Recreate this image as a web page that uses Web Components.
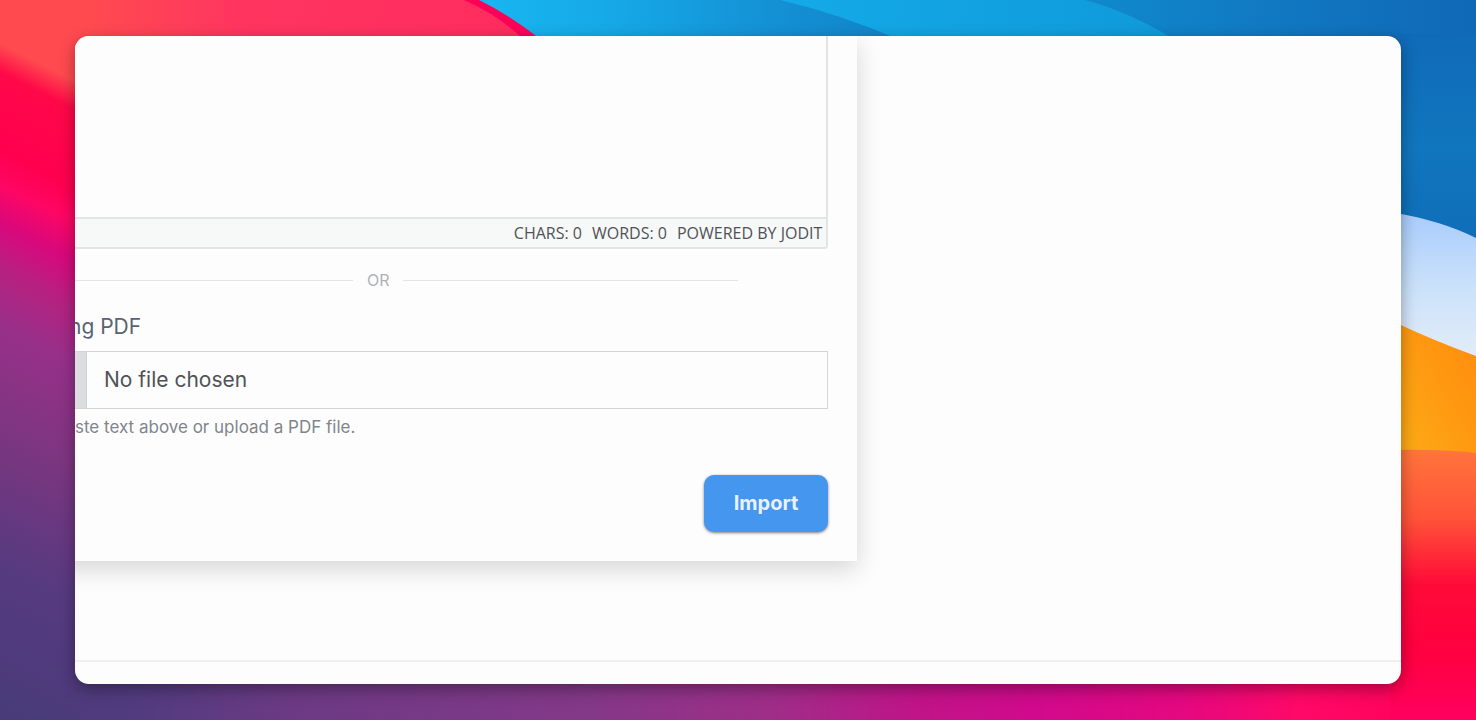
<!DOCTYPE html>
<html lang="en">
<head>
<meta charset="utf-8">
<meta name="viewport" content="width=device-width, initial-scale=1">
<title>Import</title>
<style>
  body {
    margin: 0;
    font-family: Inter, "Liberation Sans", sans-serif;
    color: #505256;
  }
</style>
</head>
<body>
<desktop-wallpaper>
  <app-window>
    <import-panel>
      <text-editor></text-editor>
      <or-divider>OR</or-divider>
      <file-field label="ng PDF" hint="ste text above or upload a PDF file."></file-field>
      <action-button slot="actions">Import</action-button>
    </import-panel>
  </app-window>
</desktop-wallpaper>

<script>
/** Attaches an open shadow root with the given markup. */
class BaseElement extends HTMLElement {
  constructor() {
    super();
    this.attachShadow({ mode: 'open' });
  }

  connectedCallback() {
    this.shadowRoot.innerHTML = this.template();
  }
}

/** Full page backdrop with coloured waves. */
class DesktopWallpaper extends BaseElement {
  template() {
    return `
      <style>
        :host {
          display: flex;
          position: relative;
          box-sizing: border-box;
          min-height: 100vh;
          padding: 36px 75px;
          overflow: hidden;
        }
        svg {
          position: absolute;
          inset: 0;
          width: 100%;
          height: 100%;
        }
        ::slotted(*) { flex: 1; min-width: 0; }
      </style>
      <svg viewBox="0 0 1476 720" preserveAspectRatio="none" aria-hidden="true">
        <defs>
          <linearGradient id="left" gradientUnits="userSpaceOnUse" x1="0" y1="0" x2="-288" y2="576">
            <stop offset="0" stop-color="#ff4a50"/>
            <stop offset=".06" stop-color="#ff4a50"/>
            <stop offset=".1" stop-color="#ff0848"/>
            <stop offset=".21" stop-color="#ff0050"/>
            <stop offset=".255" stop-color="#ff0664"/>
            <stop offset=".31" stop-color="#d8087c"/>
            <stop offset=".37" stop-color="#b82080"/>
            <stop offset=".45" stop-color="#98308a"/>
            <stop offset=".6" stop-color="#7c3680"/>
            <stop offset=".78" stop-color="#573a80"/>
            <stop offset="1" stop-color="#483b7a"/>
          </linearGradient>
          <linearGradient id="top" gradientUnits="userSpaceOnUse" x1="0" y1="0" x2="535" y2="0">
            <stop offset="0" stop-color="#ff4a50"/>
            <stop offset=".17" stop-color="#ff4a50"/>
            <stop offset=".45" stop-color="#ff3560"/>
            <stop offset="1" stop-color="#ff2c5e"/>
          </linearGradient>
          <linearGradient id="bottom" gradientUnits="userSpaceOnUse" x1="0" y1="0" x2="1476" y2="0">
            <stop offset="0" stop-color="#483b7a"/>
            <stop offset=".1" stop-color="#533b80"/>
            <stop offset=".2" stop-color="#6c3a84"/>
            <stop offset=".4" stop-color="#843888"/>
            <stop offset=".52" stop-color="#9e2e88"/>
            <stop offset=".62" stop-color="#c01488"/>
            <stop offset=".7" stop-color="#d00a8c"/>
            <stop offset=".8" stop-color="#e40880"/>
            <stop offset=".88" stop-color="#ff0868"/>
            <stop offset="1" stop-color="#ff0054"/>
          </linearGradient>
          <linearGradient id="sky" gradientUnits="userSpaceOnUse" x1="480" y1="0" x2="1476" y2="0">
            <stop offset="0" stop-color="#18b6f0"/>
            <stop offset=".12" stop-color="#16aae8"/>
            <stop offset=".3" stop-color="#1490d4"/>
            <stop offset=".42" stop-color="#1284c8"/>
            <stop offset=".62" stop-color="#1088cc"/>
            <stop offset=".8" stop-color="#1178c2"/>
            <stop offset="1" stop-color="#1068b6"/>
          </linearGradient>
          <linearGradient id="wave" gradientUnits="userSpaceOnUse" x1="770" y1="0" x2="1170" y2="0">
            <stop offset="0" stop-color="#14aae8"/>
            <stop offset="1" stop-color="#109ada"/>
          </linearGradient>
          <linearGradient id="side" x1="0" y1="0" x2="0" y2="1">
            <stop offset="0" stop-color="#106ab8"/>
            <stop offset=".5" stop-color="#1076be"/>
            <stop offset="1" stop-color="#106cb8"/>
          </linearGradient>
          <linearGradient id="cloud" x1="0" y1="0" x2="0" y2="1">
            <stop offset="0" stop-color="#a8ccfc"/>
            <stop offset=".5" stop-color="#cce2fa"/>
            <stop offset="1" stop-color="#e6eef8"/>
          </linearGradient>
          <linearGradient id="sun" x1="1" y1="0" x2="0" y2="1">
            <stop offset="0" stop-color="#ff8c10"/>
            <stop offset=".4" stop-color="#ff9810"/>
            <stop offset="1" stop-color="#fcb018"/>
          </linearGradient>
          <linearGradient id="ember" x1="0" y1="0" x2="0" y2="1">
            <stop offset="0" stop-color="#ff743c"/>
            <stop offset=".25" stop-color="#ff5438"/>
            <stop offset=".5" stop-color="#ff0a38"/>
            <stop offset=".75" stop-color="#ff0040"/>
            <stop offset="1" stop-color="#ff0060"/>
          </linearGradient>
        </defs>
        <rect width="1476" height="720" fill="url(#left)"/>
        <path d="M75 0H600V60H75Z" fill="url(#top)"/>
        <rect x="80" y="660" width="1396" height="60" fill="url(#bottom)"/>
        <path d="M464 0Q500 16 524 40H560L490 0Z" fill="#ff0058"/>
        <path d="M479 0H1476V60H565Q520 20 479 0Z" fill="url(#sky)"/>
        <path d="M780 0Q840 14 900 40H1175Q1130 12 1085 0Z" fill="url(#wave)"/>
        <path d="M1390 34H1476V260H1390Z" fill="url(#side)"/>
        <path d="M1390 212Q1440 220 1476 238V370H1390Z" fill="url(#cloud)"/>
        <path d="M1390 320Q1432 340 1476 356V470H1390Z" fill="url(#sun)"/>
        <path d="M1390 450Q1440 449 1476 453V720H1390Z" fill="url(#ember)"/>
      </svg>
      <slot></slot>
    `;
  }
}

/** Rounded window that clips the page shown in it. */
class AppWindow extends BaseElement {
  template() {
    return `
      <style>
        :host {
          display: flex;
          position: relative;
          background: #fdfdfd;
          border-radius: 14px;
          box-shadow: 0 5px 16px rgba(0, 0, 0, 0.36);
        }
        main {
          display: flex;
          flex: 1;
          flex-direction: column;
          min-width: 0;
          overflow: hidden;
          border-radius: 14px;
        }
        /* the panel runs on past the left edge of the window */
        ::slotted(*) {
          width: calc(59% + 40px);
          margin-left: -40px;
        }
        hr {
          width: 100%;
          height: 2px;
          margin: auto 0 22px;
          border: 0;
          background: #eff0f0;
        }
      </style>
      <main>
        <slot></slot>
        <hr>
      </main>
    `;
  }
}

/** Form card with its actions at the bottom right. */
class ImportPanel extends BaseElement {
  template() {
    return `
      <style>
        :host {
          display: block;
          box-sizing: border-box;
          padding: 0 29px 29px 40px;
          background: #fdfdfd;
          box-shadow: 0 8px 24px rgba(0, 0, 0, 0.16);
        }
        footer {
          display: flex;
          justify-content: flex-end;
          margin-top: 36px;
        }
      </style>
      <form>
        <slot></slot>
        <footer><slot name="actions"></slot></footer>
      </form>
    `;
  }
}

/** Plain editing area with a status bar below it. */
class TextEditor extends BaseElement {
  template() {
    return `
      <style>
        :host {
          display: block;
          border: 2px solid #e4e4e4;
          border-width: 0 2px 2px 0;
          border-radius: 0 0 4px 0;
        }
        textarea {
          display: block;
          box-sizing: border-box;
          width: 100%;
          height: 181px;
          padding: 8px;
          border: 0;
          outline: 0;
          background: transparent;
          resize: none;
          font: inherit;
        }
        .status {
          display: flex;
          justify-content: flex-end;
          gap: 10px;
          padding: 0 4px;
          border-top: 2px solid #e4e4e4;
          background: #f7f8f8;
          font: 16px/28px "Open Sans", "Noto Sans", sans-serif;
          white-space: nowrap;
        }
        a { color: inherit; text-decoration: none; }
      </style>
      <textarea aria-label="Text to import"></textarea>
      <div class="status">
        <span>CHARS: 0</span>
        <span>WORDS: 0</span>
        <a href="#">POWERED BY JODIT</a>
      </div>
    `;
  }
}

/** Horizontal rule with a word in the middle. */
class OrDivider extends BaseElement {
  template() {
    return `
      <style>
        :host {
          display: flex;
          align-items: center;
          gap: 14px;
          margin: 20px 90px 0 -57px;
          color: #b0b2b5;
          font-size: 16px;
          line-height: 22px;
        }
        :host::before,
        :host::after {
          content: "";
          flex: 1;
          height: 1px;
          background: #e4e4e4;
        }
      </style>
      <slot></slot>
    `;
  }
}

/**
 * File picker with a label above and a hint below.
 *
 * Attributes:
 * - label: text above the box.
 * - hint: text below the box.
 */
class FileField extends BaseElement {
  connectedCallback() {
    super.connectedCallback();
    const input = this.shadowRoot.querySelector('input');
    const name = this.shadowRoot.querySelector('.name');
    input.addEventListener('change', () => {
      name.textContent = input.files.length ? input.files[0].name : 'No file chosen';
    });
  }

  template() {
    return `
      <style>
        :host {
          display: block;
          margin-top: 22px;
        }
        .label {
          display: block;
          margin-left: -6px;
          color: #5a6270;
          font-size: 21px;
          line-height: 28px;
        }
        .box {
          display: flex;
          position: relative;
          margin-top: 10px;
          border: 1px solid #d4d4d4;
          border-left: 0;
          font-size: 21px;
          line-height: 56px;
        }
        .box:focus-within { border-color: #4596ee; }
        .browse {
          width: 11px;
          border-right: 1px solid #d0d1d2;
          background: #dcddde;
        }
        .name { padding: 0 17px; }
        input {
          position: absolute;
          inset: 0;
          width: 100%;
          height: 100%;
          opacity: 0;
          cursor: pointer;
        }
        .hint {
          margin: 6px 0 0;
          color: #80858c;
          font-size: 17px;
          line-height: 24px;
        }
      </style>
      <label class="label" for="file">${this.getAttribute('label')}</label>
      <div class="box">
        <span class="browse"></span>
        <span class="name">No file chosen</span>
        <input id="file" type="file" accept="application/pdf" aria-describedby="hint">
      </div>
      <p class="hint" id="hint">${this.getAttribute('hint')}</p>
    `;
  }
}

/** Primary push button. */
class ActionButton extends BaseElement {
  template() {
    return `
      <style>
        :host { display: block; }
        button {
          display: block;
          padding: 0 30px;
          border: 0;
          border-radius: 10px;
          background: #4596ee;
          box-shadow: 0 1px 3px rgba(0, 0, 0, 0.5);
          color: #e8f2fe;
          font: 700 20px/57px Inter, "Liberation Sans", sans-serif;
          cursor: pointer;
        }
        button:hover { background: #3a8ae2; }
      </style>
      <button type="button"><slot></slot></button>
    `;
  }
}

customElements.define('desktop-wallpaper', DesktopWallpaper);
customElements.define('app-window', AppWindow);
customElements.define('import-panel', ImportPanel);
customElements.define('text-editor', TextEditor);
customElements.define('or-divider', OrDivider);
customElements.define('file-field', FileField);
customElements.define('action-button', ActionButton);
</script>
</body>
</html>
